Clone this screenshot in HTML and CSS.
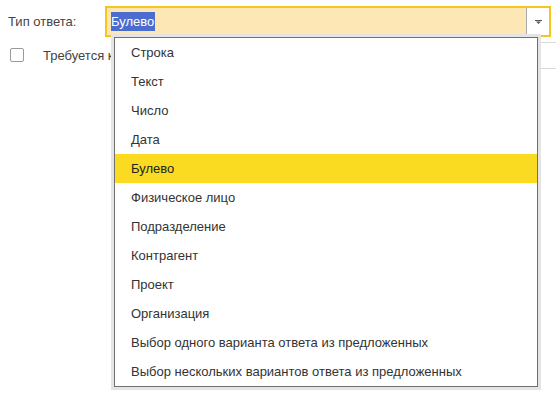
FILE: index.html
```html
<!DOCTYPE html>
<html lang="ru">
<head>
<meta charset="utf-8">
<link rel="stylesheet" href="styles.css">
</head>
<body>
<div class="form">
  <div class="row row-type">
    <div class="label">Тип ответа:</div>
    <div class="combo">
      <div class="combo-field"><span class="sel">Булево</span></div>
      <div class="combo-btn">
        <svg width="7" height="5" viewBox="0 0 7 5"><rect x="0" y="0" width="7" height="1" fill="#555"/><path d="M1 1.5 H6 L3.5 4 Z" fill="#555"/></svg>
      </div>
    </div>
  </div>
  <div class="row row-check">
    <span class="checkbox"></span>
    <span class="check-label">Требуется комментарий</span>
    <div class="field"></div>
  </div>
</div>
<ul class="dropdown">
  <li>Строка</li>
  <li>Текст</li>
  <li>Число</li>
  <li>Дата</li>
  <li class="active">Булево</li>
  <li>Физическое лицо</li>
  <li>Подразделение</li>
  <li>Контрагент</li>
  <li>Проект</li>
  <li>Организация</li>
  <li>Выбор одного варианта ответа из предложенных</li>
  <li>Выбор нескольких вариантов ответа из предложенных</li>
</ul>
</body>
</html>
```
FILE: styles.css
```css
html, body {
  margin: 0;
  padding: 0;
  background: #fff;
  overflow: hidden;
}
body {
  width: 556px;
  height: 396px;
  position: relative;
  font-family: "Liberation Sans", Arial, sans-serif;
  font-size: 13px;
  color: #333;
}
.form {
  padding-top: 6px;
}
.row {
  display: flex;
  align-items: center;
}
.row-type {
  height: 31px;
}
.label {
  width: 97px;
  padding-left: 8px;
  color: #444;
}
.combo {
  width: 446px;
  height: 31px;
  box-sizing: border-box;
  border: 2px solid #f6c61d;
  display: flex;
  background: #fff;
}
.combo-field {
  flex: 1;
  background: #fde7b5;
  border-right: 1px solid #a9a9a9;
  display: flex;
  align-items: center;
  padding-left: 4px;
}
.sel {
  background: #4a6dcf;
  color: #fff;
  line-height: 19px;
  padding: 0 1px 0 0;
}
.combo-btn {
  width: 22px;
  display: flex;
  align-items: center;
  justify-content: center;
  padding-top: 1px;
}
.row-check {
  margin-top: 5px;
  height: 26px;
}
.checkbox {
  flex: none;
  width: 12px;
  height: 12px;
  border: 1px solid #9a9a9a;
  border-radius: 2px;
  margin-left: 10px;
  margin-right: 19px;
  background: #fff;
}
.check-label {
  flex: none;
  width: 70px;
  overflow: hidden;
  color: #444;
  white-space: nowrap;
}
.field {
  margin-left: 60px;
  flex: 1;
  height: 25px;
  border-top: 1px solid #d9d9d9;
  border-bottom: 1px solid #d9d9d9;
}
.dropdown {
  position: absolute;
  left: 114px;
  top: 37px;
  width: 422px;
  margin: 0;
  padding: 0;
  list-style: none;
  border: 1px solid #707070;
  background: #fff;
  box-shadow: 0 0 0 3px #e4e4e4;
}
.dropdown li {
  height: 29px;
  line-height: 29px;
  padding-left: 16px;
  white-space: nowrap;
}
.dropdown li.active {
  background: #fadb22;
  color: #222;
}
```
